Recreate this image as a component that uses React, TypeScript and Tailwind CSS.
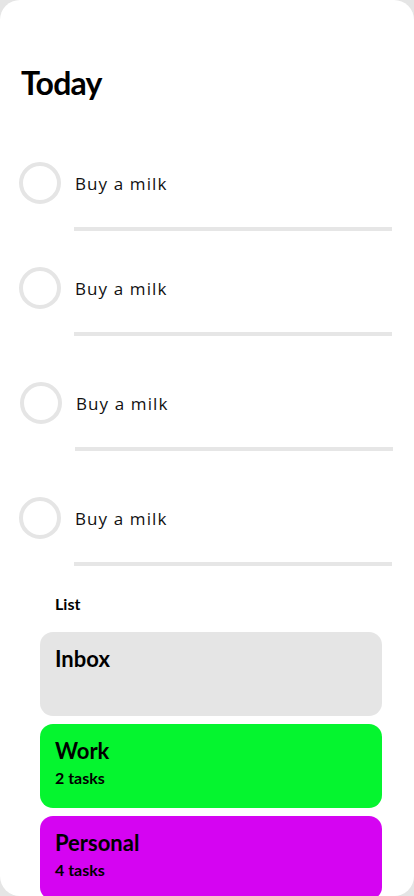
import React from 'react'

const tasks = [
  { id: 1, title: 'Buy a milk', gap: 'mt-[60px]', shift: '' },
  { id: 2, title: 'Buy a milk', gap: 'mt-[36px]', shift: '' },
  { id: 3, title: 'Buy a milk', gap: 'mt-[46px]', shift: 'ml-px' },
  { id: 4, title: 'Buy a milk', gap: 'mt-[46px]', shift: '' },
]

const lists = [
  { name: 'Inbox', count: null, bg: 'bg-[#e5e5e5]' },
  { name: 'Work', count: '2 tasks', bg: 'bg-[#05f52f]' },
  { name: 'Personal', count: '4 tasks', bg: 'bg-[#d504f2]' },
]

function TaskRow({ task }) {
  return (
    <div className={`${task.gap} ${task.shift}`}>
      <div className="flex flex-row items-center pl-[19px]">
        <div className="h-[42px] w-[42px] rounded-full border-4 border-[#e5e5e5]" />
        <p className="ml-[14px] text-[17px] tracking-[1.1px] text-[#111] font-['Open_Sans',sans-serif]">{task.title}</p>
      </div>
      <div className="ml-[74px] mt-[23px] w-[318px] h-[4px] bg-[#e6e6e6]" />
    </div>
  )
}

export default function App() {
  return (
    <div className="min-h-screen bg-[#e5e5e5] font-['Lato',sans-serif]">
      <div className="h-[896px] w-full overflow-hidden rounded-[20px] bg-white">
        <h1 className="pt-[64px] pl-[21px] text-[32px] leading-[1.2] tracking-[-0.8px] font-bold text-black">Today</h1>

        <div className="flex flex-col">
          {tasks.map(t => <TaskRow key={t.id} task={t} />)}
        </div>

        <p className="mt-[28px] pl-[55px] text-[16px] leading-[1.2] font-bold text-black">List</p>

        <div className="mt-[18px] flex flex-col gap-2 pl-[40px] pr-[32px]">
          {lists.map(l => (
            <div key={l.name} className={`h-[84px] rounded-[13px] px-[15px] pt-[14px] ${l.bg}`}>
              <p className="text-[22px] leading-[1.2] font-bold text-black">{l.name}</p>
              {l.count && <p className="mt-[4px] text-[16px] leading-[1.2] font-bold text-black">{l.count}</p>}
            </div>
          ))}
        </div>
      </div>
    </div>
  )
}
